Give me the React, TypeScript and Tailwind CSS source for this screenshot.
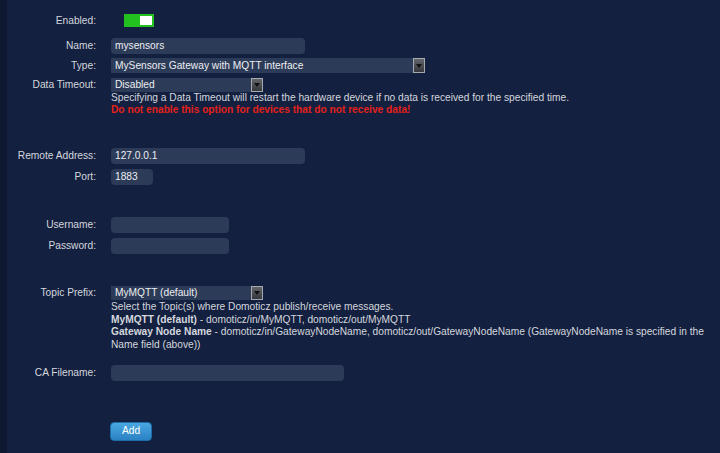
import React from "react";

// Hardware setup form (MySensors MQTT gateway)

function Label({ children }: { children: React.ReactNode }) {
  return <div className="w-[96px] shrink-0 text-right text-[#d3d7de]">{children}</div>;
}

function TextInput({ value, width }: { value?: string; width: string }) {
  return (
    <div className={`ml-[15px] flex h-full items-center rounded-[4px] bg-[#2c3b58] px-[4px] text-[#eceef2] ${width}`}>
      {value}
    </div>
  );
}

function SelectBox({ value, width }: { value: string; width: string }) {
  return (
    <div className={`ml-[15px] flex h-full items-stretch bg-[#2c3b58] ${width}`}>
      <div className="flex flex-1 items-center px-[4px] text-[#eceef2]">{value}</div>
      <div className="flex w-[12px] items-center justify-center border border-[#a4a9b0] bg-gradient-to-b from-[#63676c] to-[#34373b]">
        <div className="h-0 w-0 border-x-[3px] border-t-[4px] border-x-transparent border-t-[#111]" />
      </div>
    </div>
  );
}

export default function App() {
  return (
    <div
      className="flex h-[453px] w-[720px] overflow-hidden bg-[#13203f] text-[10.2px] leading-[12px]"
      style={{ fontFamily: '"Liberation Sans", Arial, sans-serif' }}
    >
      <div className="w-[7px] shrink-0 bg-[#0e1831]" />
      <div className="-ml-[7px] flex flex-1 flex-col pt-[14px]">
        {/* Enabled */}
        <div className="flex h-[13px] items-center">
          <Label>Enabled:</Label>
          <div className="ml-[28px] flex h-[13px] w-[30px] items-center justify-end bg-[#22c11f] pr-[2px]">
            <div className="h-[9px] w-[12px] bg-white" />
          </div>
        </div>

        <div className="mt-[11px] flex h-[16px] items-center">
          <Label>Name:</Label>
          <TextInput value="mysensors" width="w-[194px]" />
        </div>

        <div className="mt-[4px] flex h-[15px] items-center">
          <Label>Type:</Label>
          <SelectBox value="MySensors Gateway with MQTT interface" width="w-[314px]" />
        </div>

        <div className="mt-[5px] flex h-[14px] items-center">
          <Label>Data Timeout:</Label>
          <SelectBox value="Disabled" width="w-[152px]" />
        </div>
        <div className="ml-[111px] text-[#d3d7de]">
          <div>Specifying a Data Timeout will restart the hardware device if no data is received for the specified time.</div>
          <div className="font-bold text-[#e3201b]">Do not enable this option for devices that do not receive data!</div>
        </div>

        <div className="mt-[32px] flex h-[16px] items-center">
          <Label>Remote Address:</Label>
          <TextInput value="127.0.0.1" width="w-[194px]" />
        </div>
        <div className="mt-[5px] flex h-[16px] items-center">
          <Label>Port:</Label>
          <TextInput value="1883" width="w-[42px]" />
        </div>

        <div className="mt-[32px] flex h-[16px] items-center">
          <Label>Username:</Label>
          <TextInput width="w-[118px]" />
        </div>
        <div className="mt-[5px] flex h-[16px] items-center">
          <Label>Password:</Label>
          <TextInput width="w-[118px]" />
        </div>

        <div className="mt-[32px] flex h-[14px] items-center">
          <Label>Topic Prefix:</Label>
          <SelectBox value="MyMQTT (default)" width="w-[152px]" />
        </div>
        <div className="ml-[111px] mt-[1px] flex w-[596px] flex-col gap-[0.5px] leading-[12px] text-[#d3d7de]">
          <p>Select the Topic(s) where Domoticz publish/receive messages.</p>
          <p>
            <b>MyMQTT (default)</b> - domoticz/in/MyMQTT, domoticz/out/MyMQTT
          </p>
          <p>
            <b>Gateway Node Name</b>
            <span> - domoticz/in/GatewayNodeName, domoticz/out/GatewayNodeName (GatewayNodeName is specified in the</span>
          </p>
          <p>Name field (above))</p>
        </div>

        <div className="mt-[14px] flex h-[16px] items-center">
          <Label>CA Filename:</Label>
          <TextInput width="w-[233px]" />
        </div>

        <div className="ml-[110px] mt-[41px]">
          <button className="flex h-[19px] w-[42px] items-center justify-center rounded-[4px] border border-[#1f6da8] bg-gradient-to-b from-[#4aa8e0] to-[#2a82c4] text-white">
            Add
          </button>
        </div>
      </div>
    </div>
  );
}
